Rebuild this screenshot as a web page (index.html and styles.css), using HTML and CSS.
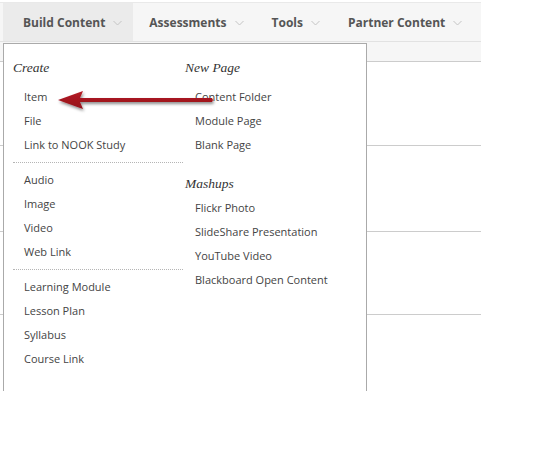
FILE: index.html
```html
<!DOCTYPE html>
<html>
<head>
<meta charset="utf-8">
<link rel="stylesheet" href="styles.css">
</head>
<body>
<div class="page">
  <nav class="navbar">
    <div class="tab active"><span class="label">Build Content</span><svg class="chev" width="9" height="6" viewBox="0 0 9 6"><polyline points="0.5,1 4.5,5 8.5,1" /></svg></div>
    <div class="tab"><span class="label">Assessments</span><svg class="chev" width="9" height="6" viewBox="0 0 9 6"><polyline points="0.5,1 4.5,5 8.5,1" /></svg></div>
    <div class="tab"><span class="label">Tools</span><svg class="chev" width="9" height="6" viewBox="0 0 9 6"><polyline points="0.5,1 4.5,5 8.5,1" /></svg></div>
    <div class="tab"><span class="label">Partner Content</span><svg class="chev" width="9" height="6" viewBox="0 0 9 6"><polyline points="0.5,1 4.5,5 8.5,1" /></svg></div>
  </nav>
  <div class="content">
    <div class="toolbar"></div>
    <div class="row r1"></div>
    <div class="row r2"></div>
    <div class="row r3"></div>
  </div>

  <div class="menu">
    <div class="col left">
      <div class="head">Create</div>
      <ul class="items">
        <li>Item</li>
        <li>File</li>
        <li>Link to NOOK Study</li>
      </ul>
      <div class="sep"></div>
      <ul class="items">
        <li>Audio</li>
        <li>Image</li>
        <li>Video</li>
        <li>Web Link</li>
      </ul>
      <div class="sep"></div>
      <ul class="items">
        <li>Learning Module</li>
        <li>Lesson Plan</li>
        <li>Syllabus</li>
        <li>Course Link</li>
      </ul>
    </div>
    <div class="col right">
      <div class="head">New Page</div>
      <ul class="items">
        <li>Content Folder</li>
        <li>Module Page</li>
        <li>Blank Page</li>
      </ul>
      <div class="head second">Mashups</div>
      <ul class="items tight">
        <li>Flickr Photo</li>
        <li>SlideShare Presentation</li>
        <li>YouTube Video</li>
        <li>Blackboard Open Content</li>
      </ul>
    </div>
  </div>

  <svg class="arrow" width="240" height="130" viewBox="0 0 240 130">
    <defs>
      <linearGradient id="red" x1="0" y1="0" x2="0" y2="1">
        <stop offset="0" stop-color="#b51d26"/>
        <stop offset="1" stop-color="#941019"/>
      </linearGradient>
      <filter id="sh" x="-10%" y="-50%" width="120%" height="200%">
        <feDropShadow dx="1" dy="2" stdDeviation="1.5" flood-color="#000" flood-opacity="0.45"/>
      </filter>
    </defs>
    <g filter="url(#sh)" fill="url(#red)">
      <polygon points="58,98 83,89 80,96 212,96 213,98 212,100 80,100 83,107"/>
    </g>
  </svg>
</div>
</body>
</html>
```

FILE: styles.css
```css
html, body {
  margin: 0;
  padding: 0;
  background: #ffffff;
}

.page {
  position: relative;
  width: 481px;
  height: 465px;
  font-family: "Open Sans", "Liberation Sans", sans-serif;
}

.navbar {
  margin-top: 2px;
  border-top: 1px solid #e9e9e9;
  border-bottom: 1px solid #e2e2e2;
  height: 38px;
  background: #f6f6f6;
  display: flex;
  align-items: stretch;
  padding-left: 3px;
}

.tab {
  display: flex;
  align-items: center;
  gap: 8px;
  padding: 0 11px 0 20px;
  font-size: 12px;
  font-weight: 700;
  color: #555555;
  white-space: nowrap;
}

.tab + .tab {
  padding-left: 16px;
  padding-right: 12px;
}

.tab.active {
  background: #ebebeb;
}

.chev {
  margin-top: 2px;
}

.chev polyline {
  fill: none;
  stroke: #c4c4c4;
  stroke-width: 1;
}

.toolbar {
  height: 19px;
  background: #f6f6f6;
  border-bottom: 1px solid #cccccc;
}

.row {
  border-bottom: 1px solid #cccccc;
}

.r1 { height: 83px; }
.r2 { height: 85px; }
.r3 { height: 82px; }

.menu {
  position: absolute;
  top: 41px;
  left: 3px;
  width: 364px;
  height: 348px;
  box-sizing: border-box;
  border: 1px solid #aaaaaa;
  border-bottom: none;
  background: #ffffff;
  display: flex;
  gap: 2px;
  padding: 12px 0 0 9px;
}

.col.left {
  width: 170px;
}

.head {
  font-family: "Liberation Serif", "DejaVu Serif", serif;
  font-style: italic;
  font-size: 13.5px;
  line-height: 24px;
  color: #333333;
  margin-bottom: 5px;
}

.head.second {
  margin-top: 15px;
  margin-bottom: 0;
}

.items {
  list-style: none;
  margin: 0;
  padding: 0 0 0 11px;
  font-size: 11px;
  line-height: 24px;
  color: #444444;
}

.right .items {
  padding-left: 10px;
}

.sep {
  margin: 5px 0;
  border-top: 1px dotted #b5b5b5;
}

.arrow {
  position: absolute;
  top: 0;
  left: 0;
  pointer-events: none;
}
```
